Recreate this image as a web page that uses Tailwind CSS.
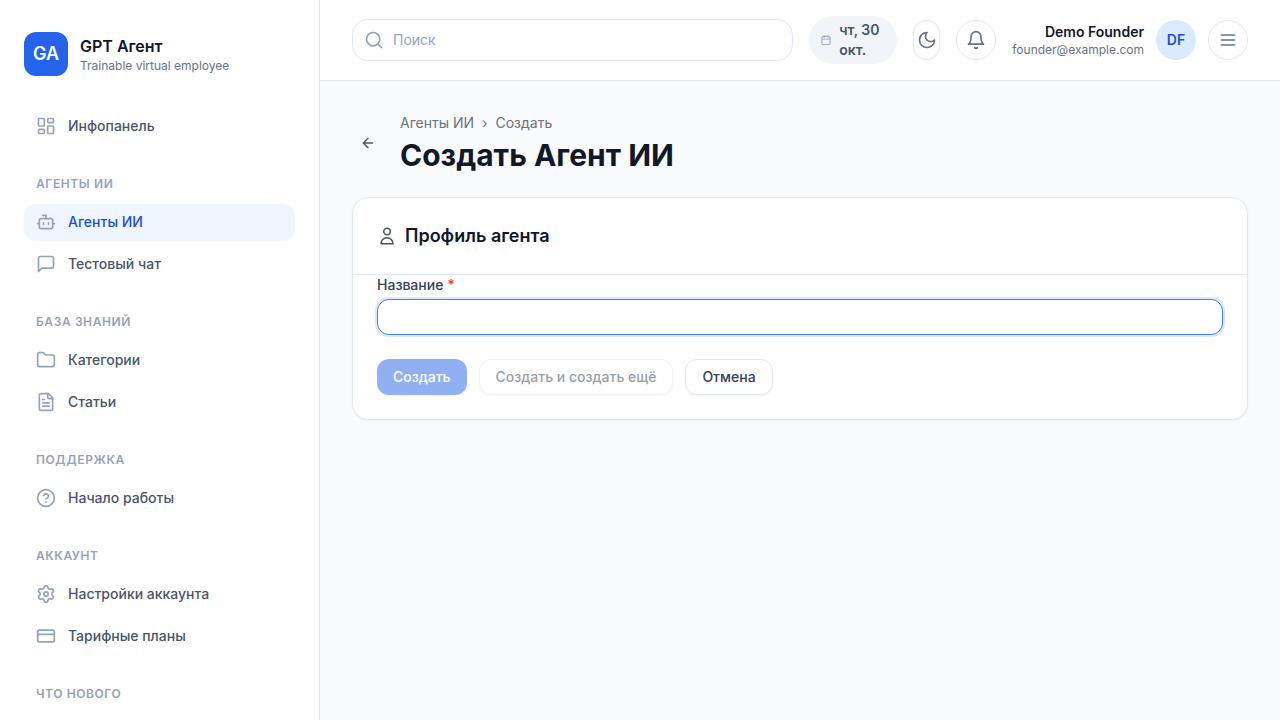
<!DOCTYPE html>
<html lang="ru">
<head>
<meta charset="utf-8">
<meta name="viewport" content="width=device-width, initial-scale=1">
<title>Создать Агент ИИ</title>
<script src="https://cdn.jsdelivr.net/npm/@tailwindcss/browser@4"></script>
</head>
<body class="flex h-screen overflow-hidden bg-[#f9fafc] font-['Inter',sans-serif] text-sm text-[#0f172a] antialiased">

<aside class="flex w-80 shrink-0 flex-col overflow-hidden border-r border-[#e2e8f0] bg-white px-6 pt-8">
  <a href="#" class="flex items-center gap-3">
    <span class="flex size-11 shrink-0 items-center justify-center rounded-xl bg-[#2563eb] text-lg font-semibold text-white">GA</span>
    <span class="flex flex-col">
      <span class="text-base leading-6 font-semibold">GPT Агент</span>
      <span class="text-xs leading-4 text-[#64748b]">Trainable virtual employee</span>
    </span>
  </a>

  <nav class="mt-8 flex flex-col gap-8 font-medium text-[#475569]">
    <a href="#" class="flex items-center gap-3 rounded-xl px-3 py-2">
      <svg class="size-5 text-[#94a3b8]" viewBox="0 0 24 24" fill="none" stroke="currentColor" stroke-width="2" stroke-linecap="round" stroke-linejoin="round"><rect width="7" height="9" x="3" y="3" rx="1"/><rect width="7" height="5" x="14" y="3" rx="1"/><rect width="7" height="9" x="14" y="12" rx="1"/><rect width="7" height="5" x="3" y="16" rx="1"/></svg>
      Инфопанель
    </a>
    <section>
      <h2 class="mb-3 px-3 text-xs font-semibold tracking-wider text-[#94a3b8] uppercase">Агенты ИИ</h2>
      <div class="flex flex-col gap-1.5">
        <a href="#" class="flex items-center gap-3 rounded-xl bg-[#eff6ff] px-3 py-2 text-[#1d4ed8] shadow-xs">
          <svg class="size-5 text-[#94a3b8]" viewBox="0 0 24 24" fill="none" stroke="currentColor" stroke-width="2" stroke-linecap="round" stroke-linejoin="round"><path d="M12 8V4H8"/><rect width="16" height="12" x="4" y="8" rx="2"/><path d="M2 14h2"/><path d="M20 14h2"/><path d="M15 13v2"/><path d="M9 13v2"/></svg>
          Агенты ИИ
        </a>
        <a href="#" class="flex items-center gap-3 rounded-xl px-3 py-2">
          <svg class="size-5 text-[#94a3b8]" viewBox="0 0 24 24" fill="none" stroke="currentColor" stroke-width="2" stroke-linecap="round" stroke-linejoin="round"><path d="M21 15a2 2 0 0 1-2 2H7l-4 4V5a2 2 0 0 1 2-2h14a2 2 0 0 1 2 2z"/></svg>
          Тестовый чат
        </a>
      </div>
    </section>
    <section>
      <h2 class="mb-3 px-3 text-xs font-semibold tracking-wider text-[#94a3b8] uppercase">База знаний</h2>
      <div class="flex flex-col gap-1.5">
        <a href="#" class="flex items-center gap-3 rounded-xl px-3 py-2">
          <svg class="size-5 text-[#94a3b8]" viewBox="0 0 24 24" fill="none" stroke="currentColor" stroke-width="2" stroke-linecap="round" stroke-linejoin="round"><path d="M20 20a2 2 0 0 0 2-2V8a2 2 0 0 0-2-2h-7.900a2 2 0 0 1-1.690-.900L9.600 3.900A2 2 0 0 0 7.930 3H4a2 2 0 0 0-2 2v13a2 2 0 0 0 2 2Z"/></svg>
          Категории
        </a>
        <a href="#" class="flex items-center gap-3 rounded-xl px-3 py-2">
          <svg class="size-5 text-[#94a3b8]" viewBox="0 0 24 24" fill="none" stroke="currentColor" stroke-width="2" stroke-linecap="round" stroke-linejoin="round"><path d="M15 2H6a2 2 0 0 0-2 2v16a2 2 0 0 0 2 2h12a2 2 0 0 0 2-2V7Z"/><path d="M14 2v4a2 2 0 0 0 2 2h4"/><path d="M10 9H8"/><path d="M16 13H8"/><path d="M16 17H8"/></svg>
          Статьи
        </a>
      </div>
    </section>
    <section>
      <h2 class="mb-3 px-3 text-xs font-semibold tracking-wider text-[#94a3b8] uppercase">Поддержка</h2>
      <a href="#" class="flex items-center gap-3 rounded-xl px-3 py-2">
        <svg class="size-5 text-[#94a3b8]" viewBox="0 0 24 24" fill="none" stroke="currentColor" stroke-width="2" stroke-linecap="round" stroke-linejoin="round"><circle cx="12" cy="12" r="10"/><path d="M9.090 9a3 3 0 0 1 5.830 1c0 2-3 3-3 3"/><path d="M12 17h.010"/></svg>
        Начало работы
      </a>
    </section>
    <section>
      <h2 class="mb-3 px-3 text-xs font-semibold tracking-wider text-[#94a3b8] uppercase">Аккаунт</h2>
      <div class="flex flex-col gap-1.5">
        <a href="#" class="flex items-center gap-3 rounded-xl px-3 py-2">
          <svg class="size-5 text-[#94a3b8]" viewBox="0 0 24 24" fill="none" stroke="currentColor" stroke-width="2" stroke-linecap="round" stroke-linejoin="round"><path d="M9.671 4.136a2.340 2.340 0 0 1 4.659 0 2.340 2.340 0 0 0 3.319 1.915 2.340 2.340 0 0 1 2.330 4.033 2.340 2.340 0 0 0 0 3.831 2.340 2.340 0 0 1-2.330 4.033 2.340 2.340 0 0 0-3.319 1.915 2.340 2.340 0 0 1-4.659 0 2.340 2.340 0 0 0-3.320-1.915 2.340 2.340 0 0 1-2.330-4.033 2.340 2.340 0 0 0 0-3.831A2.340 2.340 0 0 1 6.350 6.051a2.340 2.340 0 0 0 3.319-1.915"/><circle cx="12" cy="12" r="2.600"/></svg>
          Настройки аккаунта
        </a>
        <a href="#" class="flex items-center gap-3 rounded-xl px-3 py-2">
          <svg class="size-5 text-[#94a3b8]" viewBox="0 0 24 24" fill="none" stroke="currentColor" stroke-width="2" stroke-linecap="round" stroke-linejoin="round"><rect width="20" height="14" x="2" y="5" rx="2"/><path d="M2 10h20"/></svg>
          Тарифные планы
        </a>
      </div>
    </section>
    <section>
      <h2 class="mb-3 px-3 text-xs font-semibold tracking-wider text-[#94a3b8] uppercase">Что нового</h2>
    </section>
  </nav>
</aside>

<div class="flex min-w-0 flex-1 flex-col">
  <header class="flex items-center gap-4 border-b border-[#e2e8f0] bg-white px-8 py-4">
    <label class="flex min-w-0 flex-1 items-center gap-[9px] rounded-2xl border border-[#e2e8f0] px-[11px] py-2.5">
      <svg class="size-5 shrink-0 text-[#94a3b8]" viewBox="0 0 24 24" fill="none" stroke="currentColor" stroke-width="2" stroke-linecap="round" stroke-linejoin="round"><circle cx="11" cy="11" r="8"/><path d="m21 21-4.300-4.300"/></svg>
      <input type="search" aria-label="Поиск" placeholder="Поиск" class="h-5 min-w-0 flex-1 bg-transparent text-sm outline-none placeholder:text-[#94a3b8]">
    </label>
    <div class="flex w-22 shrink-0 items-center gap-2 rounded-full bg-[#f1f5f9] px-3 py-1 font-semibold text-[#475569]">
      <svg class="size-2.5 shrink-0 text-[#94a3b8]" viewBox="1 1 22 22" fill="none" stroke="currentColor" stroke-width="2" stroke-linecap="round" stroke-linejoin="round"><path d="M8 2v4"/><path d="M16 2v4"/><rect width="18" height="18" x="3" y="4" rx="2"/><path d="M3 10h18"/></svg>
      <span>чт, 30 окт.</span>
    </div>
    <button type="button" aria-label="Тёмная тема" class="flex h-10 w-[27px] shrink-0 items-center justify-center rounded-full border border-[#e2e8f0] text-[#64748b]">
      <svg class="size-5 shrink-0" viewBox="0 0 24 24" fill="none" stroke="currentColor" stroke-width="2" stroke-linecap="round" stroke-linejoin="round"><path d="M12 3a6 6 0 0 0 9 9 9 9 0 1 1-9-9Z"/></svg>
    </button>
    <button type="button" aria-label="Уведомления" class="flex size-10 shrink-0 items-center justify-center rounded-full border border-[#e2e8f0] text-[#64748b]">
      <svg class="size-5" viewBox="0 0 24 24" fill="none" stroke="currentColor" stroke-width="2" stroke-linecap="round" stroke-linejoin="round"><path d="M6 8a6 6 0 0 1 12 0c0 7 3 9 3 9H3s3-2 3-9"/><path d="M10.300 21a1.940 1.940 0 0 0 3.400 0"/></svg>
    </button>
    <div class="flex shrink-0 items-center gap-3">
      <div class="flex flex-col text-right">
        <span class="leading-5 font-semibold">Demo Founder</span>
        <span class="text-xs leading-4 text-[#64748b]">founder@example.com</span>
      </div>
      <span class="flex size-10 items-center justify-center rounded-full bg-[#dbeafe] font-semibold text-[#1d4ed8]">DF</span>
      <button type="button" aria-label="Меню" class="flex size-10 items-center justify-center rounded-full border border-[#e2e8f0] text-[#64748b]">
        <svg class="size-5" viewBox="0 0 24 24" fill="none" stroke="currentColor" stroke-width="2" stroke-linecap="round" stroke-linejoin="round"><path d="M4 6h16"/><path d="M4 12h16"/><path d="M4 18h16"/></svg>
      </button>
    </div>
  </header>

  <main class="flex flex-col gap-6 p-8">
    <div class="flex items-center gap-4">
      <a href="#" aria-label="Назад" class="flex size-8 items-center justify-center rounded-lg text-[#475569]">
        <svg class="size-4" viewBox="0 0 24 24" fill="none" stroke="currentColor" stroke-width="2" stroke-linecap="round" stroke-linejoin="round"><path d="m12 19-7-7 7-7"/><path d="M19 12H5"/></svg>
      </a>
      <div>
        <nav aria-label="Навигация" class="flex gap-2 leading-5 text-[#6b7280]"><a href="#">Агенты ИИ</a><span>›</span><span>Создать</span></nav>
        <h1 class="mt-1 text-3xl leading-9 font-bold text-[#111827]">Создать Агент ИИ</h1>
      </div>
    </div>

    <form class="rounded-2xl border border-[#e2e8f0] bg-white shadow-xs">
      <div class="flex items-center gap-2 border-b border-[#e2e8f0] p-6">
        <svg class="size-5 text-[#475569]" viewBox="0 0 24 24" fill="none" stroke="currentColor" stroke-width="1.800" stroke-linecap="round" stroke-linejoin="round"><circle cx="12" cy="6.600" r="3.900"/><path d="M4.800 21.200a7.200 7.200 0 0 1 14.400 0z"/></svg>
        <h2 class="text-lg font-semibold">Профиль агента</h2>
      </div>
      <div class="px-6 pb-6">
        <label for="agent-name" class="block leading-5 font-medium text-[#334155]">Название <span class="font-semibold text-[#ef4444]">*</span></label>
        <input id="agent-name" type="text" required class="mt-1 block h-9 w-full rounded-xl border border-[#3b82f6] bg-white px-3 ring-2 ring-[#dbeafe] outline-none">
        <div class="mt-6 flex gap-3">
          <button type="submit" disabled class="h-9 rounded-xl bg-[#2563eb] px-4 font-medium text-white opacity-50 shadow-xs">Создать</button>
          <button type="button" disabled class="h-9 rounded-xl border border-[#e2e8f0] px-4 font-medium text-[#334155] opacity-50 shadow-xs">Создать и создать ещё</button>
          <button type="button" class="h-9 rounded-xl border border-[#e2e8f0] px-4 font-medium text-[#334155] shadow-xs">Отмена</button>
        </div>
      </div>
    </form>
  </main>
</div>
</body>
</html>
